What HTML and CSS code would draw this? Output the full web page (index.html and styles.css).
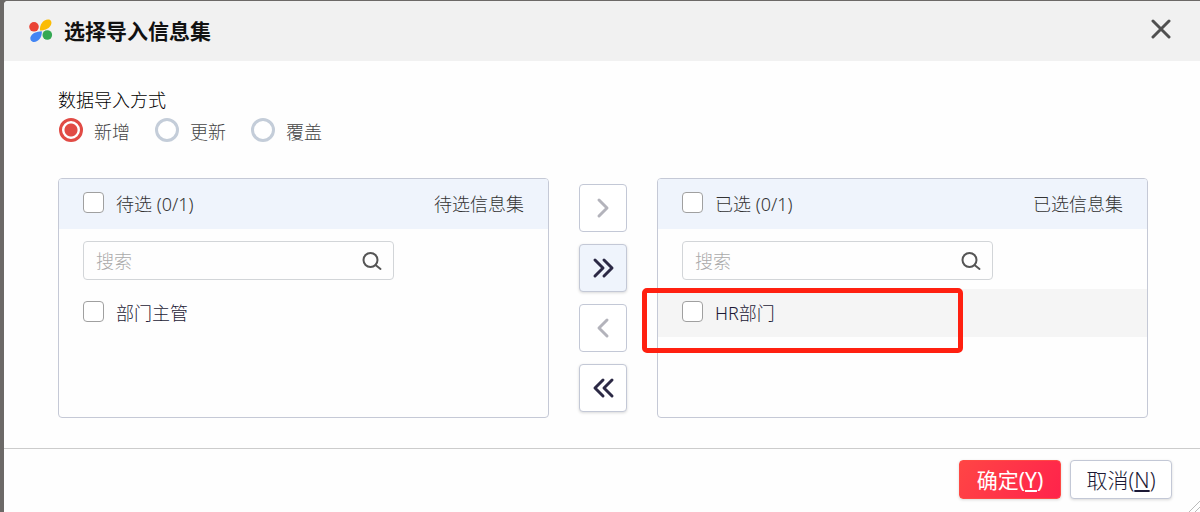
FILE: index.html
```html
<!DOCTYPE html>
<html lang="zh-CN">
<head>
    <meta charset="UTF-8">
    <title>选择导入信息集</title>
    <link rel="stylesheet" href="styles.css">
</head>
<body>
    <div class="dialog" role="dialog" aria-labelledby="dialogTitle">
        <header class="dialog-header">
            <svg class="logo" viewBox="0 0 24 24" width="24" height="24">
                <circle cx="5" cy="7.800" r="4.800" fill="#ea4335"/>
                <path d="M11 11.600C10.500 6 14 .800 19 .600C21.500 .500 23 2.500 22.300 5C21 9.500 16.500 11.200 11 11.600Z" fill="#fbbc05"/>
                <path d="M12.800 12.200C13.300 18 9.500 22.700 5 23C2.200 23 .800 20.500 1.500 18C3 14 7.500 12.500 12.800 12.200Z" fill="#4285f4"/>
                <circle cx="18.300" cy="16" r="4.800" fill="#34a853"/>
            </svg>
            <h1 id="dialogTitle">选择导入信息集</h1>
            <button type="button" class="close" aria-label="关闭">
                <svg viewBox="0 0 20 20" width="20" height="20"><path d="M2 2L18 18M18 2L2 18"/></svg>
            </button>
        </header>

        <main class="dialog-body">
            <fieldset class="mode">
                <legend>数据导入方式</legend>
                <div class="mode-options">
                    <label><input type="radio" name="mode" checked><span>新增</span></label>
                    <label><input type="radio" name="mode"><span>更新</span></label>
                    <label><input type="radio" name="mode"><span>覆盖</span></label>
                </div>
            </fieldset>

            <div class="transfer">
                <section class="panel">
                    <div class="panel-head">
                        <label class="check"><input type="checkbox"><span>待选 (0/1)</span></label>
                        <span>待选信息集</span>
                    </div>
                    <div class="search">
                        <input type="text" placeholder="搜索" aria-label="搜索待选信息集">
                        <svg viewBox="0 0 20 20" width="20" height="20"><circle cx="8.500" cy="9" r="7"/><path d="M13.500 14L18.500 18"/></svg>
                    </div>
                    <ul>
                        <li><label class="check"><input type="checkbox"><span>部门主管</span></label></li>
                    </ul>
                </section>

                <div class="moves">
                    <button type="button" disabled aria-label="右移">
                        <svg viewBox="0 0 24 24" width="24" height="24"><path d="M8 4L16 12L8 20"/></svg>
                    </button>
                    <button type="button" class="active" aria-label="全部右移">
                        <svg viewBox="0 0 24 24" width="24" height="24"><path d="M4 4L12 12L4 20M13 4L21 12L13 20"/></svg>
                    </button>
                    <button type="button" disabled aria-label="左移">
                        <svg viewBox="0 0 24 24" width="24" height="24"><path d="M16 4L8 12L16 20"/></svg>
                    </button>
                    <button type="button" aria-label="全部左移">
                        <svg viewBox="0 0 24 24" width="24" height="24"><path d="M12 4L4 12L12 20M21 4L13 12L21 20"/></svg>
                    </button>
                </div>

                <section class="panel">
                    <div class="panel-head">
                        <label class="check"><input type="checkbox"><span>已选 (0/1)</span></label>
                        <span>已选信息集</span>
                    </div>
                    <div class="search">
                        <input type="text" placeholder="搜索" aria-label="搜索已选信息集">
                        <svg viewBox="0 0 20 20" width="20" height="20"><circle cx="8.500" cy="9" r="7"/><path d="M13.500 14L18.500 18"/></svg>
                    </div>
                    <ul>
                        <li class="hover"><label class="check"><input type="checkbox"><span>HR部门</span></label><div class="marker"></div></li>
                    </ul>
                </section>
            </div>
        </main>

        <footer class="dialog-footer">
            <button type="button" class="btn primary">确定(<u>Y</u>)</button>
            <button type="button" class="btn">取消(<u>N</u>)</button>
            <svg class="grip" viewBox="0 0 12 12" width="12" height="12"><path d="M1 12L12 1M7 12L12 7"/></svg>
        </footer>
    </div>
</body>
</html>
```
FILE: styles.css
```css
*{
    box-sizing: border-box;
}
body{
    margin: 0;
    padding: 1px 0 0 4px;
    min-height: 100vh;
    display: flex;
    background-color: #6c6967;
    font-family: "Noto Sans", "Noto Sans CJK SC", sans-serif;
    font-size: 18px;
    font-weight: 300;
    line-height: 24px;
    color: #333;
}
button, input{
    font: inherit;
}
svg{
    fill: none;
    stroke-linecap: round;
    stroke-linejoin: round;
}
.dialog{
    position: relative;
    flex: 1;
    display: flex;
    flex-direction: column;
    background-color: #fefefe;
    border-top-left-radius: 4px;
    overflow: hidden;
}
.dialog-header{
    display: flex;
    align-items: center;
    height: 60px;
    padding: 0 29px 0 25px;
    background-color: #f1f1f1;
}
.dialog-header h1{
    margin: 0 auto 0 11px;
    font-size: 21px;
    font-weight: 700;
    color: #111;
}
.close{
    display: flex;
    padding: 0 0 4px;
    border: none;
    background: none;
    stroke: #505050;
    stroke-width: 3;
}
.dialog-body{
    flex: 1;
    padding: 27px 52px 30px 54px;
}
.mode{
    margin: 0;
    padding: 0;
    border: none;
}
.mode legend{
    padding: 0;
    color: #000;
}
.mode-options{
    display: flex;
    gap: 25px;
    padding: 6px 0 0 1px;
}
.mode-options label{
    display: flex;
    gap: 11px;
    color: #444;
}
.mode-options span{
    padding-top: 2px;
}
input[type="radio"]{
    appearance: none;
    width: 24px;
    height: 24px;
    margin: 0;
    border: 3px solid #c4cdd9;
    border-radius: 50%;
    background-color: #fff;
}
input[type="radio"]:checked{
    border-color: #e14b45;
    background: radial-gradient(circle, #e14b45 6px, #fff 7px);
}
.transfer{
    display: flex;
    gap: 30px;
    margin-top: 34px;
}
.panel{
    flex: 1;
    min-height: 240px;
    border: 1px solid #c5c9d6;
    border-radius: 4px;
}
.panel-head{
    display: flex;
    justify-content: space-between;
    align-items: center;
    height: 50px;
    padding: 0 24px;
    background-color: #eff4fc;
    border-radius: 3px 3px 0 0;
}
.check{
    display: flex;
    align-items: center;
    gap: 12px;
}
input[type="checkbox"]{
    appearance: none;
    width: 21px;
    height: 21px;
    margin: 0 0 4px;
    border: 1px solid #a0a0a0;
    border-radius: 4px;
    background-color: #fff;
}
.search{
    display: flex;
    align-items: center;
    width: 311px;
    max-width: 100%;
    height: 39px;
    margin: 12px 24px 9px;
    padding: 0 11px 0 12px;
    border: 1px solid #d2d5d8;
    border-radius: 4px;
    stroke: #555;
    stroke-width: 2;
}
.search input{
    flex: 1;
    min-width: 0;
    padding: 0;
    border: none;
    outline: none;
    background: none;
}
.search input::placeholder{
    color: #aaa;
}
.panel ul{
    margin: 0;
    padding: 0;
    list-style: none;
}
.panel li{
    position: relative;
    display: flex;
    align-items: center;
    height: 48px;
    padding: 0 24px;
    color: #1c1935;
}
.panel li.hover{
    background-color: #f5f5f5;
}
.marker{
    position: absolute;
    top: -1px;
    left: -16px;
    width: 321px;
    height: 65px;
    border: 5px solid #ff2010;
    border-radius: 5px;
    pointer-events: none;
}
.moves{
    display: flex;
    flex-direction: column;
    gap: 12px;
    padding-top: 6px;
}
.moves button{
    display: flex;
    align-items: center;
    justify-content: center;
    width: 48px;
    height: 48px;
    padding: 0;
    border: 1px solid #c3c8d6;
    border-radius: 4px;
    background-color: #fff;
    box-shadow: 0 1px 3px rgba(0, 0, 0, 0.15);
    stroke: #2c2945;
    stroke-width: 3;
}
.moves button:disabled{
    stroke: #b3b3bb;
    box-shadow: none;
}
.moves button.active{
    background-color: #eff4fc;
}
.dialog-footer{
    display: flex;
    justify-content: flex-end;
    gap: 9px;
    padding: 11px 28px 13px;
    border-top: 1px solid #ccc;
}
.btn{
    width: 102px;
    height: 39px;
    padding: 0;
    border: 1px solid #c3c8d6;
    border-radius: 4px;
    background-color: #fff;
    box-shadow: 0 1px 3px rgba(0, 0, 0, 0.15);
    font-size: 21px;
    color: #1c1935;
}
.btn.primary{
    border-color: #ff4a45;
    background: linear-gradient(120deg, #ff4545, #ff234b);
    font-weight: 400;
    color: #fff;
}
.grip{
    position: absolute;
    right: 0;
    bottom: 0;
    stroke: #bbb;
}
```
